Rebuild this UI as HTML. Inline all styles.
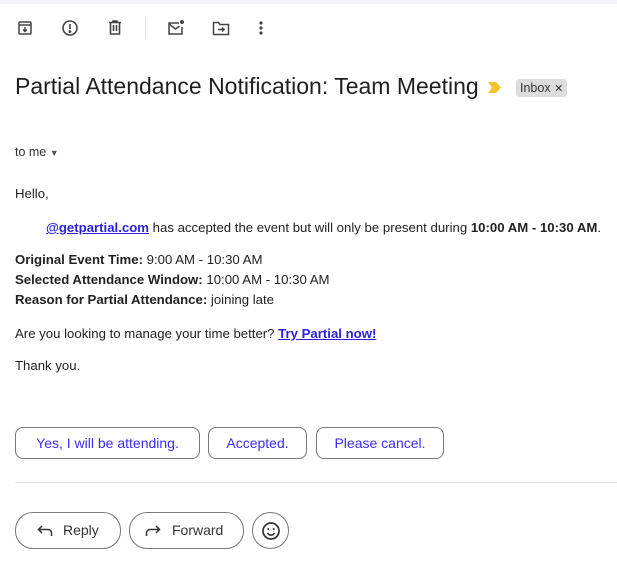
<!DOCTYPE html>
<html><head><meta charset="utf-8"><style>
*{margin:0;padding:0;box-sizing:border-box}
body{width:617px;height:573px;background:#fff;position:relative;overflow:hidden;font-family:"Liberation Sans",Arial,sans-serif;color:#222}
.a{position:absolute;white-space:nowrap}
.t{font-size:13.2px;letter-spacing:0}
b{font-weight:bold}
a{color:#2a1fe0;font-weight:bold;text-decoration:underline}
.btn{position:absolute;border:1px solid #777;border-radius:8px;color:#3a2ef0;font-size:14px;display:flex;align-items:center;justify-content:center}
.pill{position:absolute;border:1px solid #777;border-radius:18px;font-size:14px;color:#333;display:flex;align-items:center}
svg{position:absolute}
</style></head><body>
<div class="a" style="left:0;top:0;width:617px;height:4px;background:#f1f3f6"></div>
<svg style="left:17px;top:20px" width="16" height="16" viewBox="0 0 16 16" fill="none" stroke="#444" stroke-width="1.5"><rect x="2" y="2" width="12" height="12" rx="1"/><line x1="2" y1="5" x2="14" y2="5"/><path d="M8 7v4M6 9.5l2 2 2-2"/></svg>
<svg style="left:61px;top:19px" width="18" height="18" viewBox="0 0 18 18" fill="none" stroke="#444" stroke-width="1.6"><circle cx="9" cy="9" r="7"/><line x1="9" y1="5" x2="9" y2="10"/><circle cx="9" cy="12.6" r=".6" fill="#444"/></svg>
<svg style="left:107px;top:19px" width="16" height="17" viewBox="0 0 16 17" fill="none" stroke="#444" stroke-width="1.6"><path d="M2 3.5h12M6 3.5V2h4v1.5M3.5 3.5V15h9V3.5M6.5 6v6M9.5 6v6"/></svg>
<div class="a" style="left:145px;top:18px;width:1px;height:20px;background:#e4e4e4"></div>
<svg style="left:167px;top:19px" width="19" height="17" viewBox="0 0 19 17" fill="none" stroke="#444" stroke-width="1.5"><path d="M12 4H2v11h13V8"/><path d="M2 5l6.5 5 4-3"/><circle cx="15" cy="3" r="2" fill="#444" stroke="none"/></svg>
<svg style="left:212px;top:21px" width="18" height="15" viewBox="0 0 18 15" fill="none" stroke="#444" stroke-width="1.5"><path d="M1.5 1.5h5l1.5 2h8.5v10h-15z"/><path d="M6 8.5h6M10 6.5l2 2-2 2"/></svg>
<svg style="left:258px;top:20px" width="6" height="16" viewBox="0 0 6 16" fill="#444"><circle cx="3" cy="3" r="1.6"/><circle cx="3" cy="8" r="1.6"/><circle cx="3" cy="13" r="1.6"/></svg>
<div class="a" style="left:15px;top:73px;font-size:23px;color:#1f1f1f">Partial Attendance Notification: Team Meeting</div>
<svg style="left:488px;top:82px" width="14" height="11" viewBox="0 0 14 11"><path d="M0 0h8l5 5.5-5 5.5H0l4-5.5z" fill="#f4c430"/></svg>
<div class="a" style="left:516px;top:79px;width:51px;height:18px;background:#ddd;border-radius:4px;font-size:12.5px;color:#333;padding:2px 0 0 4px">Inbox <span style="font-size:11px">✕</span></div>
<div class="a" style="left:15px;top:145px;font-size:12.5px;color:#333">to me <span style="font-size:9px;color:#555">▼</span></div>
<div class="a t" style="left:15px;top:186px">Hello,</div>
<div class="a t" style="left:46px;top:220px"><a>@getpartial.com</a> has accepted the event but will only be present during <b>10:00 AM - 10:30 AM</b>.</div>
<div class="a t" style="left:15px;top:252px"><b>Original Event Time:</b> 9:00 AM - 10:30 AM</div>
<div class="a t" style="left:15px;top:272px"><b>Selected Attendance Window:</b> 10:00 AM - 10:30 AM</div>
<div class="a t" style="left:15px;top:292px"><b>Reason for Partial Attendance:</b> joining late</div>
<div class="a t" style="left:15px;top:326px">Are you looking to manage your time better? <a>Try Partial now!</a></div>
<div class="a t" style="left:15px;top:358px">Thank you.</div>
<div class="btn" style="left:15px;top:427px;width:185px;height:32px">Yes, I will be attending.</div>
<div class="btn" style="left:208px;top:427px;width:99px;height:32px">Accepted.</div>
<div class="btn" style="left:316px;top:427px;width:128px;height:32px">Please cancel.</div>
<div class="a" style="left:15px;top:482px;width:602px;height:1px;background:#e8e8ec"></div>
<div class="pill" style="left:15px;top:512px;width:106px;height:37px"><svg style="left:21px;top:12px" width="16" height="12" viewBox="0 0 16 12" fill="none" stroke="#333" stroke-width="1.5"><path d="M5 1L1.5 4.5 5 8M1.5 4.5H11a3.5 3.5 0 0 1 3.5 3.5v3"/></svg><span style="position:absolute;left:47px;top:9px">Reply</span></div>
<div class="pill" style="left:129px;top:512px;width:115px;height:37px"><svg style="left:15px;top:12px" width="16" height="12" viewBox="0 0 16 12" fill="none" stroke="#333" stroke-width="1.5"><path d="M11 1l3.5 3.5L11 8M14.5 4.5H5A3.5 3.5 0 0 0 1.5 8v3"/></svg><span style="position:absolute;left:42px;top:9px">Forward</span></div>
<div class="pill" style="left:252px;top:512px;width:37px;height:37px;border-radius:50%"><svg style="left:8px;top:8px" width="20" height="20" viewBox="0 0 20 20" fill="none" stroke="#333" stroke-width="1.7"><circle cx="10" cy="10" r="8"/><path d="M6.5 12a4 4 0 0 0 7 0"/><circle cx="7.3" cy="8" r="1" fill="#333" stroke="none"/><circle cx="12.7" cy="8" r="1" fill="#333" stroke="none"/></svg></div>
</body></html>
